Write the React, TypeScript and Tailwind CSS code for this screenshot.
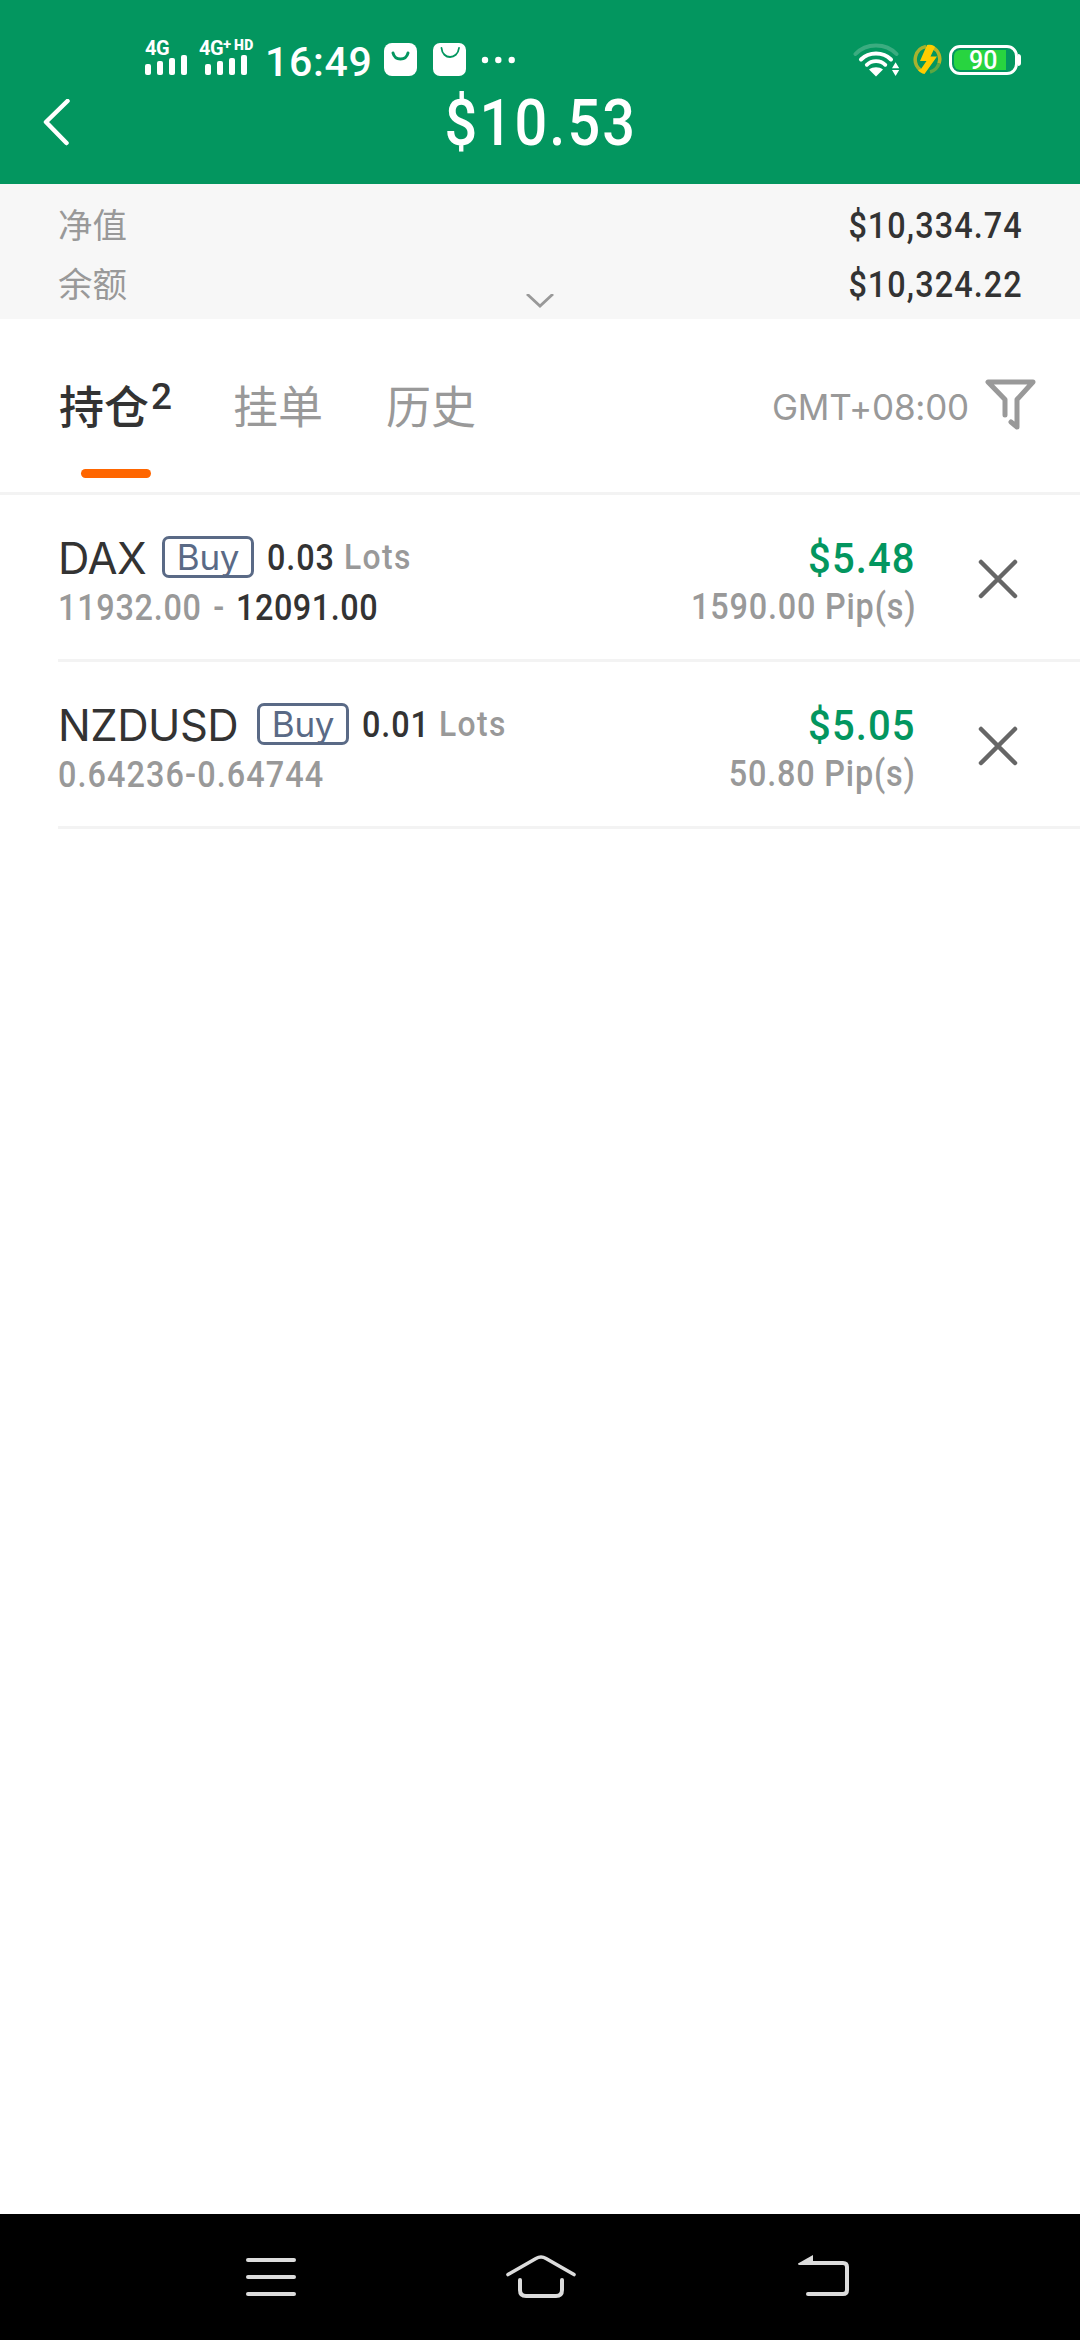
import type { ReactNode } from 'react';

type Position = {
  symbol: string;
  symbolWidth: string;
  lots: string;
  open: string;
  openSpacing: string;
  close?: string;
  profit: string;
  pips: string;
};

const positions: Position[] = [
  {
    symbol: 'DAX',
    symbolWidth: 'w-[104px]',
    lots: '0.03',
    open: '11932.00 -',
    openSpacing: 'w-[178px] tracking-[0.8px] [word-spacing:3px]',
    close: '12091.00',
    profit: '$5.48',
    pips: '1590.00 Pip(s)',
  },
  {
    symbol: 'NZDUSD',
    symbolWidth: 'w-[199px]',
    lots: '0.01',
    open: '0.64236-0.64744',
    openSpacing: 'tracking-[1.2px]',
    profit: '$5.05',
    pips: '50.80 Pip(s)',
  },
];

function Signal() {
  return (
    <svg width="42" height="20" viewBox="0 0 42 20" fill="#fff">
      <rect x="0" y="9" width="6" height="11" rx="2" />
      <rect x="12" y="6" width="6" height="14" rx="2" />
      <rect x="24" y="3" width="6" height="17" rx="2" />
      <rect x="36" y="0" width="6" height="20" rx="2" />
    </svg>
  );
}

function StatusBar() {
  return (
    <div className="flex h-[84px] items-start pt-[40px] pl-[145px] pr-[59px] text-white">
      <div className="flex w-[54px] flex-col">
        <span className="h-[15px] text-[20px] leading-[16px] font-bold tracking-[-0.5px]">4G</span>
        <Signal />
      </div>
      <div className="flex w-[66px] flex-col">
        <span className="flex h-[15px] font-bold">
          <span className="w-[24px] text-[20px] leading-[16px] tracking-[-0.5px]">4G</span>
          <span className="w-[11px] text-[15px] leading-[9px]">+</span>
          <span className="text-[14px] leading-[11px] font-black tracking-[0.4px]">HD</span>
        </span>
        <span className="pl-[6px]">
          <Signal />
        </span>
      </div>
      <span className="w-[119px] text-[41px] leading-[45px] font-medium tracking-[0.7px]">16:49</span>
      <svg className="mt-[3px]" width="132" height="34" viewBox="0 0 132 34" fill="none">
        <rect x="0" y="0" width="33" height="33" rx="8" fill="#fff" />
        <path d="M9 10c2 8 13 8 15 0" stroke="#03965f" strokeWidth="3" strokeLinecap="round" />
        <rect x="49" y="0" width="33" height="33" rx="7" fill="#fff" />
        <path d="M57.500 5c1 12 16 12 17.500 0" stroke="#03965f" strokeWidth="1.800" strokeLinecap="round" />
        <circle cx="101" cy="17" r="3.200" fill="#fff" />
        <circle cx="114.300" cy="17" r="3.200" fill="#fff" />
        <circle cx="127.700" cy="17" r="3.200" fill="#fff" />
      </svg>
      <div className="ml-auto flex items-start pt-[3px]">
        <svg width="48" height="36" viewBox="0 0 48 36" fill="none" stroke="#fff" strokeLinecap="round">
          <path d="M2.500 11C13-.5 33-.5 43.500 11" stroke="#3bac80" strokeWidth="4" />
          <path d="M8 16.500c8-8 22-8 30 0" strokeWidth="4" />
          <path d="M13.800 21.800c5-5 13.500-5 18.500 0" strokeWidth="3.800" />
          <path d="M16 26.500c4-3 10-3 14 0L23 33.500z" fill="#fff" stroke="none" />
          <path d="M39 25.300l3.600-6 3.600 6zM39 27l3.600 6 3.600-6z" fill="#fff" stroke="none" />
        </svg>
        <svg className="ml-[12px]" width="31" height="33" viewBox="0 0 31 33" fill="none">
          <path d="M13 3.500A13.200 13.200 0 0 0 7.500 27" stroke="#a8b22e" strokeWidth="3.500" />
          <path d="M20 4.500a13.200 13.200 0 0 1 6 16" stroke="#b9b427" strokeWidth="3.500" />
          <path d="M26 20.500a13.200 13.200 0 0 1-9 8.500" stroke="#5da642" strokeWidth="3.500" />
          <path d="M14 2c5-1 7 .5 8 2l-4.500 9.500h6.500L11.500 31c-3-.5-5-2-6.500-4l3-1 5.500-8H7z" fill="#fc0" />
        </svg>
        <div className="ml-[5px] flex items-center pt-[2px]">
          <div className="h-[30px] w-[69px] rounded-[11px] border-[3px] border-white p-[2px]">
            <div className="relative h-[20px] w-[52px] rounded-l-[6px] bg-[#28d440]">
              <span className="absolute top-0 left-[15px] text-[25px] leading-[21px] font-medium">90</span>
            </div>
          </div>
          <div className="h-[12px] w-[3px] rounded-r-[3px] bg-white" />
        </div>
      </div>
    </div>
  );
}

function Header() {
  return (
    <header className="h-[184px] bg-[#03965f]">
      <StatusBar />
      <div className="grid h-[78px] grid-cols-[1fr_auto_1fr] items-center text-white">
        <svg className="ml-[42px]" width="30" height="50" viewBox="0 0 30 50" fill="none">
          <path d="M25.500 2L4 23L24.500 44" stroke="#fff" strokeWidth="4.500" strokeLinecap="round" strokeLinejoin="round" />
        </svg>
        <h1 className="scale-x-[0.9] pt-px pl-[2px] text-[64px] leading-[78px] font-medium tracking-[2.400px]">$10.53</h1>
      </div>
    </header>
  );
}

function SummaryRow({ label, value }: { label: string; value: string }) {
  return (
    <div className="flex h-[59px] items-center justify-between pt-[2px]">
      <span className="text-[34.500px] leading-[57px] text-[#999]">{label}</span>
      <span className="-mr-px origin-right scale-x-[0.9] text-[36px] leading-[59px] font-medium tracking-[1.200px]">{value}</span>
    </div>
  );
}

function Tab({ children, active }: { children: ReactNode; active?: boolean }) {
  return (
    <div
      className={
        active
          ? 'flex w-[174px] pt-[3px] text-[45px] leading-[60px] font-medium text-[#333]'
          : 'w-[153px] pt-[3px] text-[45px] leading-[60px] font-normal text-[#999]'
      }
    >
      {children}
    </div>
  );
}

function PositionRow({ p }: { p: Position }) {
  return (
    <div className="ml-[58px] flex h-[167px] items-start border-b-[3px] border-[#f3f3f3] pt-[39px]">
      <div className="flex-1">
        <div className="flex h-[46px] items-center">
          <span className={`${p.symbolWidth} pt-[2px] font-['Inter'] text-[43.500px] leading-[50px] tracking-[-0.5px] text-[#333]`}>
            {p.symbol}
          </span>
          <span className="mr-[13px] flex h-[42px] w-[92px] justify-center rounded-[7px] border-[3px] border-[#5a6a86] font-['Inter'] text-[35px] leading-[36px] tracking-[-0.3px] text-[#5a6a86]">
            Buy
          </span>
          <span className="w-[77px] origin-left scale-x-[0.9] pt-[2px] text-[36px] leading-[44px] font-medium tracking-[1px]">{p.lots}</span>
          <span className="origin-left scale-x-[0.91] pt-[2px] text-[35px] leading-[44px] font-medium tracking-[1.500px] text-[#999]">Lots</span>
        </div>
        <div className="flex h-[54px] text-[36px] leading-[56px] font-medium">
          <span className={`${p.openSpacing} origin-left scale-x-[0.9] whitespace-nowrap text-[#999]`}>{p.open}</span>
          {p.close && (
            <span className="origin-left scale-x-[0.9] tracking-[0.600px]">{p.close}</span>
          )}
        </div>
      </div>
      <div className="-mr-[3px] flex flex-col items-end">
        <span className="origin-right scale-x-[0.93] text-[43px] leading-[48px] font-medium tracking-[1.200px] text-[#03965f]">{p.profit}</span>
        <span className="origin-right scale-x-[0.9] text-[36px] leading-[50px] font-medium tracking-[0.900px] text-[#999]">{p.pips}</span>
      </div>
      <svg className="mt-[23px] mr-[60px] ml-[63px]" width="44" height="44" viewBox="0 0 44 44">
        <path d="M5 5L39 39M39 5L5 39" stroke="#666" strokeWidth="4.500" strokeLinecap="round" />
      </svg>
    </div>
  );
}

function NavBar() {
  return (
    <nav className="mt-auto flex h-[126px] items-start bg-black pt-[38px] pl-[246px]">
      <svg width="50" height="60" viewBox="0 0 50 60" fill="#dcdcdc">
        <rect y="6" width="50" height="4" rx="2" />
        <rect y="23" width="50" height="4" rx="2" />
        <rect y="40" width="50" height="4" rx="2" />
      </svg>
      <svg className="ml-[210px]" width="70" height="60" viewBox="0 0 70 60" fill="none" stroke="#dcdcdc" strokeLinecap="round">
        <path d="M2 22.500L30 6.500Q35 3.500 40 6.500L68 22.500" strokeWidth="3.600" />
        <path d="M14 28V38Q14 44 20 44H50Q56 44 56 38V28" strokeWidth="4" />
      </svg>
      <svg className="ml-[222px]" width="52" height="60" viewBox="0 0 52 60" fill="none">
        <path d="M13 11H45Q49 11 49 15V38Q49 42 45 42H10" stroke="#dcdcdc" strokeWidth="4" strokeLinecap="round" />
        <path d="M0 11.500L15 3V13H1.500Q0 13 0 11.500z" fill="#dcdcdc" />
      </svg>
    </nav>
  );
}

export default function App() {
  return (
    <div className="flex h-[2340px] w-[1080px] flex-col overflow-hidden bg-white font-['Roboto','Noto_Sans_CJK_SC',sans-serif] text-[#333]">
      <Header />
      <section className="relative h-[135px] bg-[#f7f7f7] px-[58px] pt-[12px]">
        <SummaryRow label="净值" value="$10,334.74" />
        <SummaryRow label="余额" value="$10,324.22" />
        <svg className="absolute top-[110px] left-[526px]" width="28" height="14" viewBox="0 0 28 14" fill="none">
          <path d="M1 0L14 12L27 0" stroke="#999" strokeWidth="2.800" />
        </svg>
      </section>
      <div className="relative flex h-[176px] items-start border-b-[3px] border-[#f3f3f3] pt-[57px] pl-[59px]">
        <Tab active>
          持仓<span className="pl-[2px] text-[37px] leading-[36px] font-medium">2</span>
        </Tab>
        <Tab>挂单</Tab>
        <Tab>历史</Tab>
        <span className="ml-auto pt-[1px] font-['Inter'] text-[35px] leading-[61px] tracking-[-0.2px] text-[#999]">GMT+08:00</span>
        <svg className="mt-[1px] mr-[43px] ml-[14px]" width="54" height="56" viewBox="0 0 54 56" fill="none" stroke="#999" strokeWidth="5" strokeLinecap="round" strokeLinejoin="round">
          <path d="M22 38V22.500L5 5H50L34 22.500V50L28 45" />
        </svg>
        <div className="absolute top-[150px] left-[81px] h-[9px] w-[70px] rounded-full bg-[#f60]" />
      </div>
      {positions.map((p) => (
        <PositionRow key={p.symbol} p={p} />
      ))}
      <NavBar />
    </div>
  );
}
